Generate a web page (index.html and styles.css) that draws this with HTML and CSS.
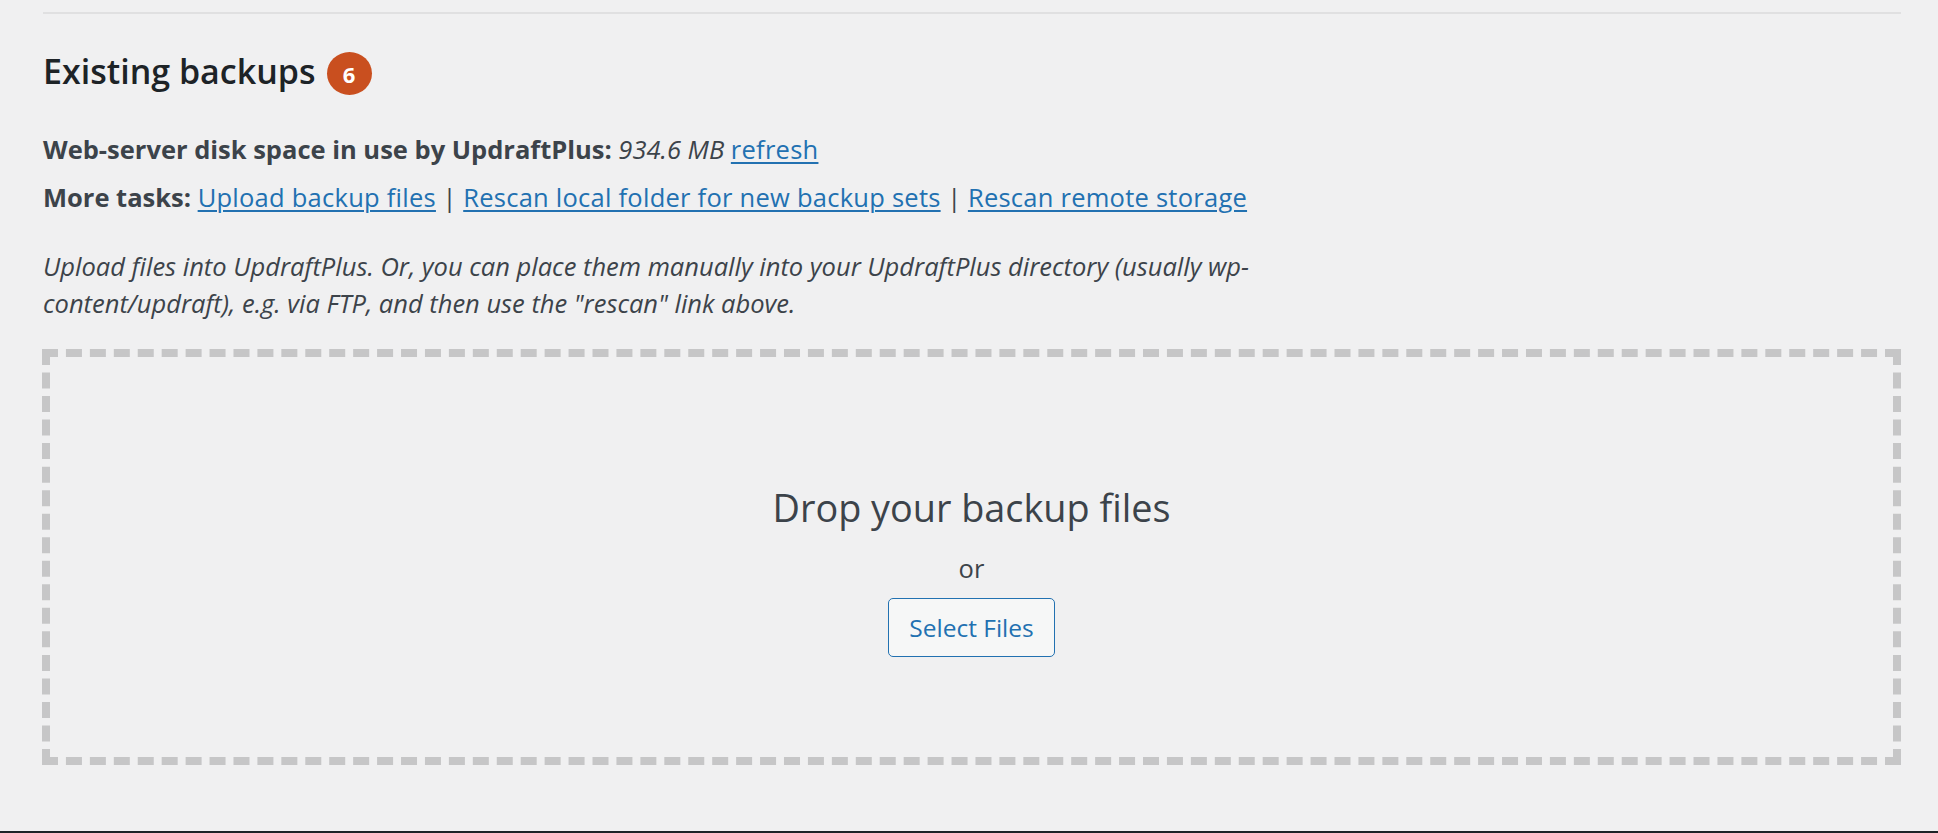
FILE: index.html
```html
<!DOCTYPE html>
<html lang="en">
<head>
<meta charset="utf-8">
<title>Existing backups</title>
<link rel="stylesheet" href="styles.css">
</head>
<body>
<div class="page">
  <main class="wrap">
    <hr class="sep">
    <h2 class="title">Existing backups <span class="count">6</span></h2>
    <p class="info"><strong>Web-server disk space in use by UpdraftPlus:</strong> <em>934.6 MB</em> <a href="#">refresh</a></p>
    <p class="info tasks"><strong>More tasks:</strong> <a href="#">Upload backup files</a> | <a href="#">Rescan local folder for new backup sets</a> | <a href="#">Rescan remote storage</a></p>
    <p class="note">Upload files into UpdraftPlus. Or, you can place them manually into your UpdraftPlus directory (usually wp-<br>content/updraft), e.g. via FTP, and then use the "rescan" link above.</p>
    <div class="drop">
      <p class="drop-title">Drop your backup files</p>
      <p class="drop-or">or</p>
      <button class="btn" type="button">Select Files</button>
    </div>
  </main>
  <div class="bottom-edge"></div>
</div>
</body>
</html>
```

FILE: styles.css
```css
html, body {
  margin: 0;
  padding: 0;
  height: 100%;
}
body {
  background: #f0f0f1;
  color: #3c434a;
  font-family: "Open Sans", "Noto Sans", "Liberation Sans", sans-serif;
  font-size: 25.5px;
  overflow: hidden;
}
.page {
  min-height: 100vh;
  display: flex;
  flex-direction: column;
}
.wrap {
  padding: 12px 37px 0 42px;
}
.sep {
  margin: 0 0 0 1px;
  border: 0;
  height: 2px;
  background: #e0e0e1;
}
.title {
  display: flex;
  align-items: center;
  gap: 11px;
  margin: 33px 0 0 1px;
  font-size: 34px;
  line-height: 43px;
  font-weight: 600;
  color: #1d2327;
}
.count {
  display: inline-flex;
  align-items: center;
  justify-content: center;
  width: 45px;
  height: 43px;
  margin-top: 5px;
  border-radius: 50%;
  background: #c94f1f;
  color: #fff;
  font-size: 22px;
  font-weight: 700;
  line-height: 1;
}
.info {
  margin: 35px 0 0 1px;
  line-height: 39px;
}
.info strong {
  font-weight: 700;
}
.info a {
  letter-spacing: 0.25px;
}
.tasks {
  margin-top: 9px;
}
a {
  color: #2271b1;
  text-decoration: underline;
  text-decoration-thickness: 2px;
  text-underline-offset: 3px;
}
.note {
  margin: 31px 0 0 1px;
  font-style: italic;
  line-height: 37px;
  white-space: nowrap;
}
.drop {
  box-sizing: border-box;
  margin-top: 27px;
  height: 416px;
  border: 8px dashed #c6c6c7;
  padding-top: 129px;
  display: flex;
  flex-direction: column;
  align-items: center;
}
.drop-title {
  margin: 0;
  font-size: 37.8px;
  line-height: 44px;
  color: #3c434a;
}
.drop-or {
  margin: 19px 0 0;
  line-height: 39px;
}
.btn {
  margin-top: 10px;
  width: 167px;
  height: 59px;
  box-sizing: border-box;
  border: 1px solid #2271b1;
  border-radius: 5px;
  background: #f6f7f7;
  color: #2271b1;
  font-family: inherit;
  font-size: 24.5px;
  padding: 0;
  cursor: pointer;
}
.bottom-edge {
  margin-top: auto;
  height: 2px;
  background: #1d2327;
}
```
